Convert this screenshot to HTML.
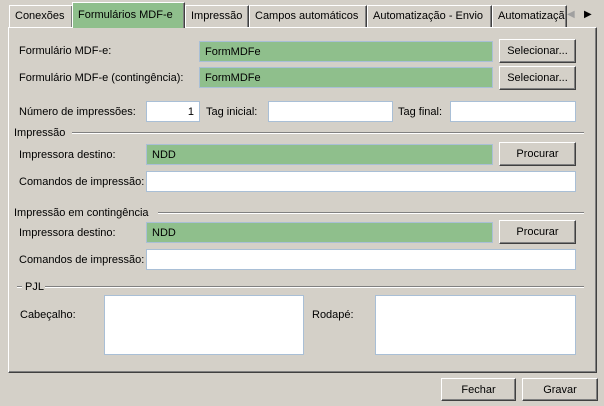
<!DOCTYPE html><html><head><meta charset="utf-8"><style>
*{box-sizing:border-box;margin:0;padding:0}
body{width:604px;height:406px;background:#d4d0c8;font-family:"Liberation Sans",Tahoma,sans-serif;font-size:11px;color:#000;position:relative;overflow:hidden}
.a{position:absolute;white-space:nowrap}
.tab{position:absolute;top:5px;height:22px;border:1px solid #fff;border-right:1px solid #404040;border-bottom:none;padding:4px 0 0 5px;background:#d4d0c8;box-shadow:inset -1px 0 #808080;white-space:nowrap}
.sel{top:2px;height:26px;background:#8fbf8c;padding-top:6px;z-index:2;border-bottom:none}
.panel{position:absolute;left:8px;top:27px;width:589px;height:346px;border:1px solid #fff;border-right-color:#404040;border-bottom-color:#404040;box-shadow:inset -1px -1px #808080}
.f{position:absolute;border:1px solid #a9bfd6;background:#fff;padding:4px 5px 0}
.g{background:#8fbf8c;border-color:#a9bfd6}
.b{position:absolute;border:1px solid #fff;border-right-color:#404040;border-bottom-color:#404040;box-shadow:inset -1px -1px #808080;text-align:center;padding-top:5px;background:#d4d0c8}
.ln{position:absolute;height:2px;border-top:1px solid #808080;border-bottom:1px solid #fff}
</style></head><body>
<div class="panel"></div>
<div class="tab" style="left:9px;width:64px">Conexões</div>
<div class="tab sel" style="left:72px;width:113px">Formulários MDF-e</div>
<div class="tab" style="left:185px;width:64px">Impressão</div>
<div class="tab" style="left:249px;width:118px">Campos automáticos</div>
<div class="tab" style="left:367px;width:125px">Automatização - Envio</div>
<div class="tab" style="left:492px;width:75px;overflow:hidden">Automatizaçã</div>
<div class="a" style="left:567px;top:9px;color:#a0a0a0;font-size:10px">◀</div>
<div class="a" style="left:584px;top:9px;font-size:10px">▶</div>

<div class="a" style="left:19px;top:45px">Formulário MDF-e:</div>
<div class="f g" style="left:199px;top:41px;width:294px;height:21px">FormMDFe</div>
<div class="b" style="left:499px;top:39px;width:77px;height:24px">Selecionar...</div>
<div class="a" style="left:19px;top:72px">Formulário MDF-e (contingência):</div>
<div class="f g" style="left:199px;top:67px;width:294px;height:21px">FormMDFe</div>
<div class="b" style="left:499px;top:66px;width:77px;height:24px">Selecionar...</div>

<div class="a" style="left:19px;top:106px">Número de impressões:</div>
<div class="f" style="left:146px;top:101px;width:54px;height:21px;text-align:right">1</div>
<div class="a" style="left:206px;top:106px">Tag inicial:</div>
<div class="f" style="left:268px;top:101px;width:125px;height:21px"></div>
<div class="a" style="left:398px;top:106px">Tag final:</div>
<div class="f" style="left:450px;top:101px;width:126px;height:21px"></div>

<div class="ln" style="left:72px;top:132px;width:512px"></div>
<div class="a" style="left:14px;top:127px">Impressão</div>
<div class="a" style="left:19px;top:149px">Impressora destino:</div>
<div class="f g" style="left:146px;top:144px;width:347px;height:21px">NDD</div>
<div class="b" style="left:499px;top:142px;width:77px;height:24px">Procurar</div>
<div class="a" style="left:19px;top:176px">Comandos de impressão:</div>
<div class="f" style="left:146px;top:171px;width:430px;height:21px"></div>

<div class="ln" style="left:158px;top:212px;width:426px"></div>
<div class="a" style="left:14px;top:207px">Impressão em contingência</div>
<div class="a" style="left:19px;top:227px">Impressora destino:</div>
<div class="f g" style="left:146px;top:222px;width:347px;height:21px">NDD</div>
<div class="b" style="left:499px;top:220px;width:77px;height:24px">Procurar</div>
<div class="a" style="left:19px;top:254px">Comandos de impressão:</div>
<div class="f" style="left:146px;top:249px;width:430px;height:21px"></div>

<div class="ln" style="left:17px;top:286px;width:5px"></div>
<div class="ln" style="left:45px;top:286px;width:539px"></div>
<div class="a" style="left:25px;top:281px">PJL</div>
<div class="a" style="left:20px;top:309px">Cabeçalho:</div>
<div class="f" style="left:104px;top:295px;width:200px;height:60px"></div>
<div class="a" style="left:312px;top:309px">Rodapé:</div>
<div class="f" style="left:375px;top:295px;width:201px;height:60px"></div>

<div class="b" style="left:441px;top:378px;width:75px;height:23px">Fechar</div>
<div class="b" style="left:522px;top:378px;width:76px;height:23px">Gravar</div>
</body></html>
